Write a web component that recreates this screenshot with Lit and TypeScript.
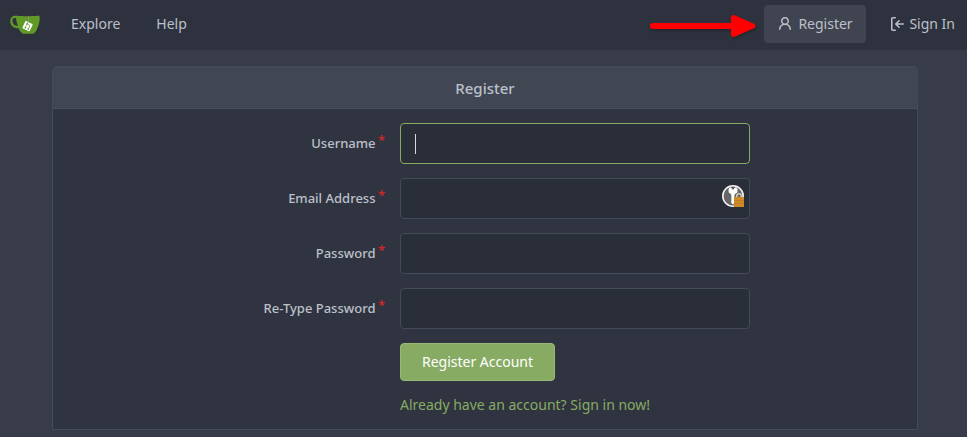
import { LitElement, html, css, svg } from 'lit';
import { customElement } from 'lit/decorators.js';

const person = svg`<svg class="icon" viewBox="0 0 16 16"><path fill-rule="evenodd" d="M10.5 5a2.5 2.5 0 11-5 0 2.5 2.5 0 015 0zm.061 3.073a4 4 0 10-5.123 0 6.004 6.004 0 00-3.431 5.142.75.75 0 001.498.07 4.5 4.5 0 018.99 0 .75.75 0 101.498-.07 6.005 6.005 0 00-3.432-5.142z"/></svg>`;
const signIn = svg`<svg class="icon" viewBox="0 0 16 16"><path fill-rule="evenodd" d="M2 2.75C2 1.784 2.784 1 3.75 1h2.5a.75.75 0 010 1.5h-2.5a.25.25 0 00-.25.25v10.5c0 .138.112.25.25.25h2.5a.75.75 0 010 1.5h-2.5A1.75 1.75 0 012 13.25V2.75zm6.56 4.5l1.97-1.97a.75.75 0 10-1.06-1.06L6.22 7.47a.75.75 0 000 1.06l3.25 3.25a.75.75 0 101.06-1.06L8.56 8.75h5.69a.75.75 0 000-1.5H8.56z"/></svg>`;

const logo = svg`<svg class="logo" viewBox="0 0 640 640">
  <path fill="#fff" d="M395.9,484.2l-126.9-61c-12.5-6-17.9-21.2-11.8-33.8l61-126.9c6-12.5,21.2-17.9,33.8-11.8c17.2,8.3,27.1,13,27.1,13l-0.1-109.2l16.7-0.1l0.1,117.1c0,0,57.4,24.2,83.1,40.1c3.7,2.3,10.2,6.8,12.9,14.4c2.1,6.1,2,13.1-1,19.3l-61,126.9C423.6,484.9,408.4,490.3,395.9,484.2z"/>
  <path fill="#609926" d="M622.7,149.8c-4.1-4.1-9.6-4-9.6-4s-117.2,6.6-177.9,8c-13.3,0.3-26.5,0.6-39.6,0.7c0,39.1,0,78.2,0,117.2c-5.5-2.6-11.1-5.3-16.6-7.9c0-36.4-0.1-109.2-0.1-109.2c-29,0.4-89.2-2.2-89.2-2.2s-141.4-7.1-156.8-8.5c-9.8-0.6-22.5-2.1-39,1.5c-8.7,1.8-33.5,7.4-53.8,26.9C-4.9,212.4,6.6,276.2,8,285.8c1.7,11.7,6.9,44.2,31.7,72.5c45.8,56.1,144.4,54.8,144.4,54.8s12.1,28.9,30.6,55.5c25,33.1,50.7,58.9,75.7,62c63,0,188.9-0.1,188.9-0.1s12,0.1,28.3-10.3c14-8.5,26.5-23.4,26.5-23.4s12.9-13.8,30.9-45.3c5.5-9.7,10.1-19.1,14.1-28c0,0,55.2-117.1,55.2-231.1C633.2,157.9,624.7,151.8,622.7,149.8z M125.6,353.9c-25.9-8.5-36.9-18.7-36.9-18.7S69.6,321.8,60,295.4c-16.5-44.2-1.4-71.2-1.4-71.2s8.4-22.5,38.5-30c13.8-3.7,31-3.1,31-3.1s7.1,59.4,15.7,94.2c7.2,29.2,24.8,77.7,24.8,77.7S142.5,359.9,125.6,353.9z M425.9,461.5c0,0-6.1,14.5-19.6,15.4c-5.8,0.4-10.3-1.2-10.3-1.2s-0.3-0.1-5.3-2.1l-112.9-55c0,0-10.9-5.7-12.8-15.6c-2.2-8.1,2.7-18.1,2.7-18.1L322,273c0,0,4.8-9.7,12.2-13c0.6-0.3,2.3-1,4.5-1.5c8.1-2.1,18,2.8,18,2.8l110.7,53.7c0,0,12.6,5.7,15.3,16.2c1.9,7.4-0.5,14-1.8,17.2C474.6,363.8,425.9,461.5,425.9,461.5z"/>
  <path fill="#609926" d="M326.8,380.1c-8.2,0.1-15.4,5.8-17.3,13.8c-1.9,8,2,16.3,9.1,20c7.7,4,17.5,1.8,22.7-5.4c5.1-7.1,4.3-16.9-1.8-23.1l24-49.1c1.5,0.1,3.7,0.2,6.2-0.5c4.1-0.9,7.1-3.6,7.1-3.6c4.2,1.8,8.6,3.8,13.2,6.1c4.8,2.4,9.3,4.9,13.4,7.3c0.9,0.5,1.8,1.1,2.8,1.9c1.6,1.3,3.4,3.1,4.7,5.5c1.9,5.5-1.9,14.9-1.9,14.9c-2.3,7.6-18.4,40.6-18.4,40.6c-8.1-0.2-15.3,5-17.7,12.5c-2.6,8.1,1.1,17.3,8.9,21.3c7.8,4,17.4,1.7,22.5-5.3c5-6.8,4.6-16.3-1.1-22.6c1.9-3.7,3.7-7.4,5.6-11.3c5-10.4,13.5-30.4,13.5-30.4c0.9-1.7,5.7-10.3,2.7-21.3c-2.5-11.4-12.6-16.7-12.6-16.7c-12.2-7.9-29.2-15.2-29.2-15.2s0-4.1-1.1-7.1c-1.1-3.1-2.8-5.1-3.9-6.3c4.7-9.7,9.4-19.3,14.1-29c-4.1-2-8.1-4-12.2-6.1c-4.8,9.8-9.7,19.7-14.5,29.5c-6.7-0.1-12.9,3.5-16.1,9.4c-3.4,6.3-2.7,14.1,1.9,19.8C343.2,346.5,335,363.3,326.8,380.1z"/>
</svg>`;

const arrow = svg`<svg class="arrow" viewBox="0 0 112 30">
  <path d="M6 16H92" stroke="#f00" stroke-width="6" stroke-linecap="round"/>
  <path d="M86.500 7.500L106 16L86.500 24.500Z" fill="#f00" stroke="#f00" stroke-width="5" stroke-linejoin="round"/>
</svg>`;

const keyBadge = svg`<svg class="key" viewBox="0 0 24 24">
  <circle cx="12" cy="12" r="10.200" fill="#666" stroke="#f2f2f2" stroke-width="1.600"/>
  <path d="M9 3L10.500 4.300H13.500L15 3L16.500 5V8.200L13.500 10.600V19L12 20.500L10.300 19V10.600L7.600 8.200V5Z" fill="#fff"/>
  <circle cx="12" cy="4.500" r="1.100" fill="#555"/>
  <path d="M15.800 14V11.800a2.200 2.200 0 014.400 0V14" fill="none" stroke="#e0d6c6" stroke-width="1.400"/>
  <rect x="13" y="13" width="10" height="10" fill="#cf8b27"/>
  <path d="M13 16.500H23M13 19.500H23" stroke="#c37e1f"/>
</svg>`;

@customElement('app-root')
export class AppRoot extends LitElement {
  static styles = css`
    :host { display: block; height: 437px; overflow: hidden; background: #383c4a; color: #bbc0ca; font: 14px/20px "Noto Sans", sans-serif; }
    * { box-sizing: border-box; }
    svg { display: block; flex: none; }
    .nav { position: relative; display: flex; align-items: center; height: 50px; padding: 0 12px 2px 10px; background: #2e323e; }
    .logo { width: 30px; height: 30px; margin: 0 31px 1px 0; }
    .help { margin-left: 36px; }
    .spacer { flex: 1; }
    .item { display: flex; align-items: center; gap: 4px; height: 38px; }
    .active { width: 102px; gap: 5px; padding-left: 13px; border-radius: 4px; background: #404450; margin-right: 23px; }
    .icon { width: 16px; height: 16px; fill: currentColor; }
    .arrow { position: absolute; left: 647px; top: 10px; width: 112px; height: 30px; filter: drop-shadow(1px 2px 1px rgba(0,0,0,.2)); }
    .box { width: 866px; height: 364px; margin: 16px 0 0 52px; border: 1px solid #444a56; border-radius: 4px 4px 0 0; background: #303440; overflow: hidden; }
    .header { height: 42px; display: flex; align-items: center; justify-content: center; background: #404652; border-bottom: 1px solid #474d59; font-size: 15px; font-weight: 500; }
    .form { padding-top: 14px; }
    .row { display: flex; height: 41px; margin-bottom: 14px; }
    .label { width: 347px; padding: 10px 15px 0 0; display: flex; justify-content: flex-end; font-size: 13px; font-weight: 500; }
    .star { color: #db2828; width: 7px; margin-left: 2.5px; margin-top: -3px; font-size: 13px; }
    .input { width: 350px; height: 41px; display: flex; align-items: center; justify-content: space-between; padding: 0 4px 0 14px; border: 1px solid #444a58; border-radius: 4px; background: #2a2e39; }
    .focus { border-color: #87ab63; }
    .caret { width: 1px; height: 20px; background: #d5dbe6; }
    .key { width: 24px; height: 24px; margin: 0 0 5px auto; }
    .actions { display: flex; flex-direction: column; align-items: flex-start; margin-left: 347px; }
    .button { width: 155px; height: 38px; border: 1px solid #98b878; border-radius: 4px; background: #87ab63; color: #fff; font: inherit; padding: 0; }
    .link { color: #87ab63; margin-top: 14px; }
  `;

  row(name: string, extra: unknown = '', focus = false) {
    return html`<div class="row"><div class="label">${name}<span class="star">*</span></div><div class="input ${focus ? 'focus' : ''}">${extra}</div></div>`;
  }

  render() {
    return html`
      <nav class="nav">
        ${logo}<span>Explore</span><span class="help">Help</span><span class="spacer"></span>
        <span class="item active">${person}<span>Register</span></span>
        <span class="item">${signIn}<span>Sign In</span></span>
        ${arrow}
      </nav>
      <section class="box">
        <div class="header">Register</div>
        <div class="form">
          ${this.row('Username', html`<span class="caret"></span>`, true)}
          ${this.row('Email Address', keyBadge)}
          ${this.row('Password')}
          ${this.row('Re-Type Password')}
          <div class="actions"><button class="button">Register Account</button><span class="link">Already have an account? Sign in now!</span></div>
        </div>
      </section>`;
  }
}
